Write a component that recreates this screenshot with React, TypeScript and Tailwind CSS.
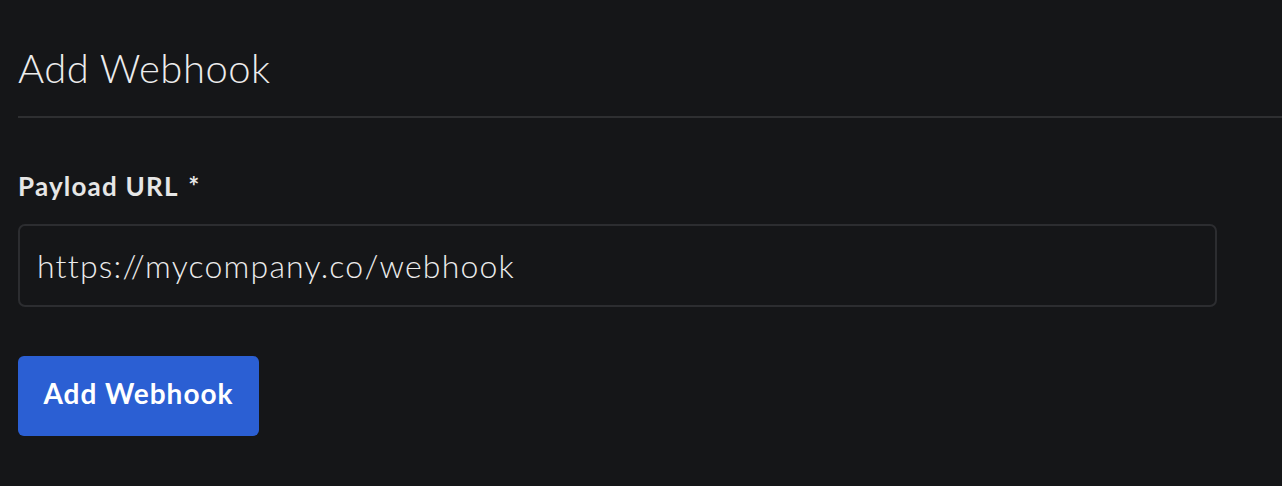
export default function App() {
  return (
    <div
      className="w-full h-[486px] bg-[#151618] text-[#ececec] pl-[18px]"
      style={{ fontFamily: 'Lato, "Noto Sans", sans-serif' }}
    >
      <div className="pt-[42px] pb-[22px] border-b-2 border-[#2e2f31]">
        <h1 className="text-[40px] font-light leading-[52px] tracking-[0.5px]">Add Webhook</h1>
      </div>
      <div className="w-[1199px] pt-[52px]">
        <label className="block text-[26px] font-bold leading-[32px] tracking-[1.2px] text-[#e6e6e6]">
          Payload URL <span className="ml-[3px]">*</span>
        </label>
        <div className="mt-[22px] h-[83px] rounded-[7px] border-2 border-[#2c2d30] flex items-center px-[17px]">
          <span className="text-[32px] font-light tracking-[1.2px] text-[#ececec]">https://mycompany.co/webhook</span>
        </div>
        <button className="mt-[49px] h-[80px] w-[241px] rounded-[6px] bg-[#2b5fd3] text-white text-[28px] font-bold tracking-[1px] pb-[6px]">
          Add Webhook
        </button>
      </div>
    </div>
  );
}
